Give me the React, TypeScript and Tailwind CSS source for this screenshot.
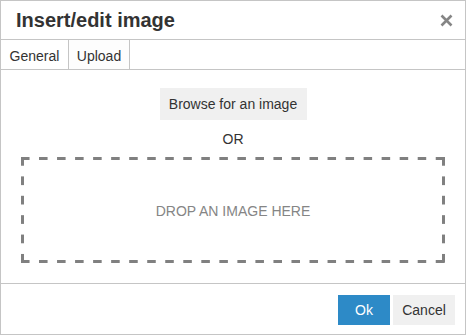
export default function App() {
  return (
    <div
      className="w-[466px] h-[335px] border border-[#c5c5c5] bg-white flex flex-col text-[#333] text-[14px]"
      style={{ fontFamily: '"Liberation Sans", Arial, sans-serif' }}
    >
      {/* title bar */}
      <div className="h-[39px] shrink-0 border-b border-[#c5c5c5] flex items-center justify-between pl-[15px] pr-[12px]">
        <h1 className="text-[20px] leading-[23px] font-bold text-[#333]">Insert/edit image</h1>
        <svg width="13" height="13" viewBox="0 0 13 13" className="mt-[1px]">
          <path d="M1.5 1.5 L11.5 11.5 M11.5 1.5 L1.5 11.5" stroke="#858585" strokeWidth="2.6" strokeLinecap="butt" />
        </svg>
      </div>

      {/* tabs */}
      <div className="h-[30px] shrink-0 border-b border-[#c5c5c5] flex">
        <div className="w-[68px] border-r border-[#c5c5c5] pt-[8px] leading-[16px] text-center">General</div>
        <div className="w-[61px] border-r border-[#c5c5c5] bg-[#fdfdfd] pt-[8px] leading-[16px] text-center">Upload</div>
      </div>

      {/* body */}
      <div className="flex-1 flex flex-col items-center pt-[18px] px-[20px]">
        <button className="w-[147px] h-[32px] bg-[#f0f0f0] text-[#333] leading-[16px]">Browse for an image</button>
        <div className="mt-[11px] leading-[16px]">OR</div>
        <div className="mt-[10px] w-full h-[106px] flex items-center justify-center bg-[linear-gradient(to_right,#808080_9px,transparent_9px),linear-gradient(to_right,#808080_9px,transparent_9px),linear-gradient(to_bottom,#808080_9px,transparent_9px),linear-gradient(to_bottom,#808080_9px,transparent_9px)] bg-[length:18.04px_3px,18.04px_3px,3px_19.4px,3px_19.4px] bg-[position:0_0,0_100%,0_0,100%_0] [background-repeat:repeat-x,repeat-x,repeat-y,repeat-y]">
          <span className="uppercase text-[#858585] leading-[16px] mt-[1px]">Drop an image here</span>
        </div>
      </div>

      {/* footer */}
      <div className="h-[51px] shrink-0 border-t border-[#c5c5c5] flex items-center justify-end gap-[3px] pr-[10px] pt-[1px]">
        <button className="w-[52px] h-[30px] bg-[#2d8ac7] text-white leading-[16px]">Ok</button>
        <button className="w-[62px] h-[30px] bg-[#f0f0f0] text-[#333] leading-[16px]">Cancel</button>
      </div>
    </div>
  )
}
